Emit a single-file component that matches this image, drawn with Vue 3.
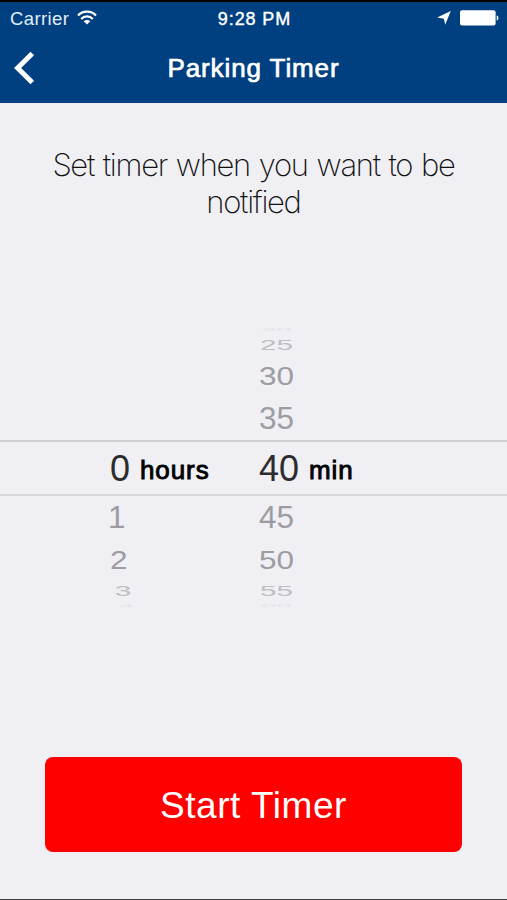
<script setup>
const rows = [
  { hour: '', minute: '20', kind: 'edge-top' },
  { hour: '', minute: '25', kind: 'far' },
  { hour: '', minute: '30', kind: 'mid' },
  { hour: '', minute: '35', kind: 'near' },
  { hour: '0', minute: '40', kind: 'selected' },
  { hour: '1', minute: '45', kind: 'near' },
  { hour: '2', minute: '50', kind: 'mid' },
  { hour: '3', minute: '55', kind: 'far lower' },
  { hour: '4', minute: '00', kind: 'edge-bottom lower' },
]
</script>

<template>
  <main class="screen">
    <header class="header">
      <div class="status">
        <div class="status-left">
          <span class="carrier">Carrier</span>
          <svg class="wifi" width="20" height="15" viewBox="0 0 20 15" fill="none" stroke="#fff" stroke-width="2.2">
            <path d="M1 5.4C6 .3 14 .3 19 5.4" />
            <path d="M4.2 8.9C7.4 5.6 12.6 5.6 15.8 8.9" />
            <path d="M10 14.6L6.7 11.3C8.5 9.6 11.5 9.6 13.3 11.3Z" fill="#fff" stroke="none" />
          </svg>
        </div>
        <span class="clock">9:28 PM</span>
        <div class="status-right">
          <svg class="location" width="14" height="14" viewBox="0 0 14 14" fill="#fff"><path d="M13.8 0L8.2 13.8L6.9 7.7L.2 6.6Z" /></svg>
          <svg class="battery" width="39" height="16" viewBox="0 0 39 16" fill="#fff">
            <rect x="0" y=".3" width="35.6" height="15.2" rx="2" />
            <path d="M36.7 5.2Q38.5 5.8 38.5 7.9T36.7 10.6Z" />
          </svg>
        </div>
      </div>
      <nav class="nav">
        <button class="back" aria-label="Back">
          <svg width="22" height="34" viewBox="0 0 22 34" fill="none" stroke="#fff" stroke-width="5">
            <path d="M18.3 2.5L3.6 17L18.3 31.5" />
          </svg>
        </button>
        <h1 class="title">Parking Timer</h1>
      </nav>
    </header>

    <p class="prompt"><span class="line">Set timer when you want to be</span><span class="line">notified</span></p>

    <section class="picker">
      <div v-for="row in rows" :key="row.minute" class="row" :class="row.kind">
        <span class="num hour">{{ row.hour }}</span>
        <span class="unit"><template v-if="row.kind === 'selected'">hours</template></span>
        <span class="num minute">{{ row.minute }}</span>
        <span class="unit"><template v-if="row.kind === 'selected'">min</template></span>
      </div>
    </section>

    <button class="start">Start Timer</button>
  </main>
</template>

<style>
body {
  background: #efeff4;
}
</style>

<style scoped>
.screen {
  box-sizing: border-box;
  height: 900px;
  display: flex;
  flex-direction: column;
  background: #efeff4;
  border-bottom: 1px solid #3e3e42;
  font-family: "Liberation Sans", Arial, sans-serif;
  overflow: hidden;
}
.header {
  box-sizing: border-box;
  height: 103px;
  flex: none;
  border-top: 2px solid #000;
  background: #004080;
  color: #fff;
}
.status {
  height: 33px;
  display: grid;
  grid-template-columns: 1fr auto 1fr;
  align-items: center;
  padding: 0 8px 0 10px;
}
.status-left,
.status-right {
  display: flex;
  align-items: center;
}
.carrier {
  font-size: 18.5px;
  letter-spacing: 0.4px;
  color: #e3edf7;
}
.wifi {
  margin-left: 8px;
  margin-top: -4px;
}
.clock {
  font-size: 18px;
  line-height: 34px;
  letter-spacing: 0.9px;
  -webkit-text-stroke: 0.4px #fff;
}
.status-right {
  justify-content: flex-end;
  gap: 9px;
}
.location {
  margin-top: -2px;
}
.battery {
  margin-top: -2px;
}
.nav {
  height: 66px;
  display: grid;
  grid-template-columns: 60px 1fr 60px;
  align-items: center;
}
.back {
  display: flex;
  padding: 0 0 0 14px;
  border: 0;
  background: none;
}
.title {
  margin: 0;
  text-align: center;
  font-size: 26px;
  font-weight: 400;
  line-height: 66px;
  letter-spacing: 0.9px;
  -webkit-text-stroke: 0.7px #fff;
}
.prompt {
  height: 74px;
  margin: 43px 0 0;
  text-align: center;
  font: 200 31px/37px Inter, sans-serif;
  letter-spacing: -1.3px;
  word-spacing: 1.4px;
  color: #111;
}
.line {
  display: block;
  white-space: nowrap;
}
.picker {
  margin-top: 105px;
  display: flex;
  flex-direction: column;
}
.row {
  box-sizing: border-box;
  display: grid;
  grid-template-columns: 30px 119px 50px 60px;
  align-items: center;
  align-content: center;
  padding-left: 110px;
  color: #9d9da1;
  font-size: 31.5px;
  line-height: 36px;
}
.num {
  transform-origin: 18px center;
}
.near {
  height: 43px;
  padding-bottom: 1px;
}
.near .hour {
  margin-left: -2px;
}
.mid {
  height: 42px;
}
.mid .num {
  transform: scaleY(0.79);
}
.far {
  height: 20px;
  color: #bdbdc2;
}
.far .num {
  transform: scale(0.94, 0.49);
}
.far.lower {
  height: 19px;
}
.edge-top,
.edge-bottom {
  color: #e2e2e7;
}
.edge-top {
  height: 10px;
}
.edge-bottom {
  height: 11px;
}
.edge-top .num,
.edge-bottom .num {
  transform: scale(0.88, 0.12);
}
.lower .hour {
  padding-left: 4px;
}
.edge-bottom .hour {
  padding-left: 7px;
}
.selected {
  height: 56px;
  padding-top: 2px;
  border-top: 2px solid #d0d0d4;
  border-bottom: 2px solid #dadade;
  color: #2c2c2f;
  font-size: 36px;
}
.unit {
  padding-top: 2px;
  font-size: 26px;
  line-height: 32px;
  letter-spacing: 0.9px;
  color: #000;
  -webkit-text-stroke: 0.9px #000;
}
.start {
  width: 417px;
  height: 95px;
  margin: 146px 0 0 45px;
  padding: 2px 0 0;
  flex: none;
  border: 0;
  border-radius: 8px;
  background: #f00;
  color: #fff;
  font: 400 37px/93px "Liberation Sans", Arial, sans-serif;
  letter-spacing: 0.55px;
}
</style>
